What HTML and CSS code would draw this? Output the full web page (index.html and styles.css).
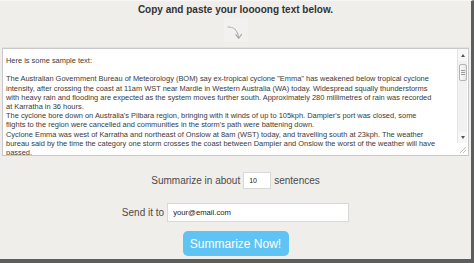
FILE: index.html
```html
<!DOCTYPE html>
<html lang="en">
<head>
<meta charset="utf-8">
<title>Summarize</title>
<link rel="stylesheet" href="styles.css">
</head>
<body>
<div class="page">
  <h1 class="title">Copy and paste your loooong text below.</h1>
  <div class="arrow-box">
    <svg width="24" height="24" viewBox="0 0 24 24" aria-hidden="true">
      <path d="M4 9 C9 8.5 13 10 14.6 19.5" fill="none" stroke="#a9a9a9" stroke-width="1.1" stroke-linecap="round"/>
      <path d="M11.8 16.6 L14.7 20.3 L17.6 16.4" fill="none" stroke="#a9a9a9" stroke-width="1.1" stroke-linecap="round" stroke-linejoin="round"/>
    </svg>
  </div>
  <div class="editor">
    <textarea class="source" spellcheck="false">Here is some sample text:

The Australian Government Bureau of Meteorology (BOM) say ex-tropical cyclone "Emma" has weakened below tropical cyclone
intensity, after crossing the coast at 11am WST near Mardie in Western Australia (WA) today. Widespread squally thunderstorms
with heavy rain and flooding are expected as the system moves further south. Approximately 280 millimetres of rain was recorded
at Karratha in 36 hours.
The cyclone bore down on Australia's Pilbara region, bringing with it winds of up to 105kph. Dampier's port was closed, some
flights to the region were cancelled and communities in the storm's path were battening down.
Cyclone Emma was west of Karratha and northeast of Onslow at 8am (WST) today, and travelling south at 23kph. The weather
bureau said by the time the category one storm crosses the coast between Dampier and Onslow the worst of the weather will have
passed.
</textarea>
    <div class="scrollbar" aria-hidden="true">
      <div class="sb-btn sb-up"><span class="tri tri-up"></span></div>
      <div class="sb-track">
        <div class="sb-thumb"><span class="grip"></span></div>
      </div>
      <div class="sb-btn sb-down"><span class="tri tri-down"></span></div>
      <div class="sb-corner">
        <svg width="10" height="12" viewBox="0 0 10 12">
          <path d="M9 4 L3 10 M9 7 L6 10" stroke="#b9b9b9" stroke-width="0.9" fill="none"/>
        </svg>
      </div>
    </div>
  </div>
  <div class="row">
    <label class="label" for="count">Summarize in about</label>
    <input class="field field-count" id="count" type="text" value="10">
    <span class="label">sentences</span>
  </div>
  <div class="row row-email">
    <label class="label" for="email">Send it to</label>
    <input class="field field-email" id="email" type="text" value="your@email.com">
  </div>
  <button class="submit" type="button">Summarize Now!</button>
</div>
</body>
</html>
```

FILE: styles.css
```css
html, body {
  margin: 0;
  padding: 0;
  background: #f0eeeb;
}
body {
  width: 474px;
  height: 263px;
  overflow: hidden;
  font-family: "Liberation Sans", Arial, sans-serif;
}
.page {
  box-sizing: border-box;
  width: 474px;
  height: 263px;
  display: flex;
  flex-direction: column;
  align-items: center;
  padding-top: 2px;
  background: #f0eeeb;
  border-right: 3px solid #5d5d5d;
  border-bottom: 4px solid #5d5d5d;
  border-top: 1px solid #f7f6f4;
}
.title {
  margin: 0;
  font-size: 10px;
  line-height: 13px;
  font-weight: bold;
  color: #333;
}
.arrow-box {
  width: 24px;
  height: 24px;
  margin-top: 2px;
  background: #f3f1ef;
}
.arrow-box svg {
  display: block;
}
.editor {
  box-sizing: border-box;
  align-self: flex-start;
  margin: 6px 0 0 2px;
  width: 467px;
  height: 108px;
  display: flex;
  border: 1px solid #c9c9c9;
  box-shadow: 0 -1px 0 #e3e1de;
  background: #fff;
}
.source {
  box-sizing: border-box;
  flex: 1;
  min-width: 0;
  height: 100%;
  margin: 0;
  padding: 7px 0 0 3px;
  border: none;
  background: #fff;
  color: #3a3a3a;
  font-family: "Liberation Sans", Arial, sans-serif;
  font-size: 7.45px;
  line-height: 9.2px;
  white-space: pre;
  overflow: hidden;
  resize: none;
  outline: none;
}
.scrollbar {
  width: 10px;
  display: flex;
  flex-direction: column;
  margin-right: 1px;
}
.sb-btn {
  height: 12px;
  display: flex;
  align-items: center;
  justify-content: center;
  background: #f7f7f7;
  border-left: 1px solid #e4e4e4;
}
.sb-down {
  height: 11px;
}
.tri {
  width: 0;
  height: 0;
  border-left: 2.5px solid transparent;
  border-right: 2.5px solid transparent;
}
.tri-up {
  border-bottom: 3px solid #555;
}
.tri-down {
  border-top: 3px solid #555;
}
.sb-track {
  flex: 1;
  background: #f1f1f1;
  border-left: 1px solid #e4e4e4;
  padding-top: 3px;
}
.sb-thumb {
  box-sizing: border-box;
  height: 17px;
  margin: 0 0.5px;
  border: 1px solid #b4b4b4;
  border-radius: 2px;
  background: linear-gradient(to right, #fafafa, #e6e6e6);
  display: flex;
  align-items: center;
  justify-content: center;
}
.grip {
  width: 4px;
  height: 5px;
  background: repeating-linear-gradient(to bottom, #9d9d9d 0 1px, transparent 1px 2px);
}
.sb-corner {
  height: 12px;
  background: #fff;
}
.sb-corner svg {
  display: block;
}
.row {
  display: flex;
  align-items: center;
  gap: 3px;
  margin-top: 16px;
}
.row-email {
  margin-top: 14px;
}
.label {
  font-size: 10px;
  color: #4a4a4a;
}
.field {
  box-sizing: border-box;
  margin: 0;
  border: 1px solid #d9d9d9;
  background: #fff;
  color: #222;
  font-family: "Liberation Sans", Arial, sans-serif;
  outline: none;
}
.field-count {
  width: 28px;
  height: 17px;
  padding: 0 0 0 5px;
  font-size: 7px;
}
.field-email {
  width: 182px;
  height: 19px;
  padding: 0 0 0 5px;
  font-size: 7.7px;
}
.submit {
  margin-top: 9px;
  width: 106px;
  height: 25px;
  padding: 0;
  border: none;
  border-radius: 5px;
  background: #5fc3f3;
  color: #fff;
  font-family: "Liberation Sans", Arial, sans-serif;
  font-size: 12px;
  cursor: pointer;
}
```
